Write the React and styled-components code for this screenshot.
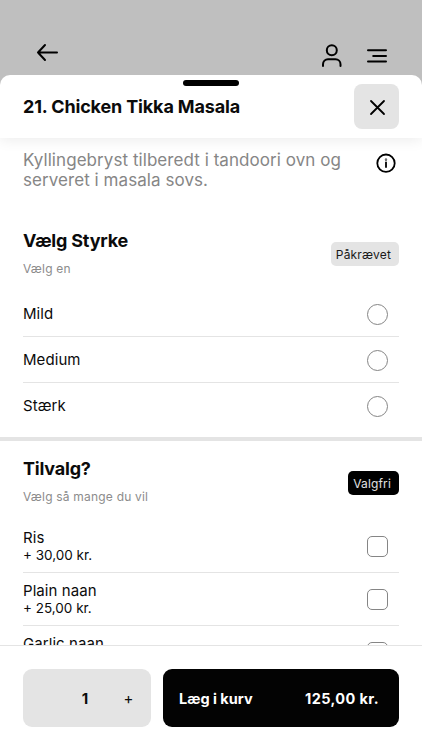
import React from "react";
import styled, { createGlobalStyle } from "styled-components";

// --- Menu Data ---
const strengths = ["Mild", "Medium", "Stærk"];

const extras = [
  { name: "Ris", price: "+ 30,00 kr." },
  { name: "Plain naan", price: "+ 25,00 kr." },
  { name: "Garlic naan", price: "+ 30,00 kr." },
];

// --- Styled Components ---

const GlobalStyle = createGlobalStyle`
  * {
    box-sizing: border-box;
  }

  body {
    margin: 0;
    background: #bfbfbf;
    color: #0b0b0b;
    font-family: Inter, "Liberation Sans", sans-serif;
  }

  button {
    border: none;
    padding: 0;
    font-family: inherit;
    color: inherit;
    cursor: pointer;
  }
`;

const Screen = styled.div`
  display: flex;
  flex-direction: column;
  width: 422px;
  height: 750px;
  overflow: hidden;
  background: #bfbfbf;
`;

const TopBar = styled.header`
  display: flex;
  align-items: flex-start;
  height: 75px;
  padding: 42px 34px 0 36px;

  svg {
    display: block;
  }
`;

const TopActions = styled.div`
  display: flex;
  gap: 23px;
  margin-left: auto;
`;

const Sheet = styled.main`
  display: flex;
  flex-direction: column;
  flex: 1;
  min-height: 0;
  background: #fff;
  border-radius: 10px 10px 0 0;
  overflow: hidden;
`;

const SheetHeader = styled.div`
  position: relative;
  display: flex;
  align-items: center;
  justify-content: space-between;
  height: 63px;
  padding: 0 23px;
  flex-shrink: 0;
  box-shadow: 0 1px 14px rgba(0, 0, 0, 0.09);
`;

const Handle = styled.div`
  position: absolute;
  top: 4.5px;
  left: 183px;
  width: 56px;
  height: 6px;
  border-radius: 3px;
  background: #000;
`;

const Title = styled.h1`
  margin: 0;
  font-size: 18px;
  line-height: 24px;
  font-weight: 700;
  letter-spacing: -0.15px;
`;

const CloseButton = styled.button`
  display: flex;
  align-items: center;
  justify-content: center;
  width: 45px;
  height: 45px;
  padding: 1px 0 0 1px;
  border-radius: 8px;
  background: #e4e4e4;
`;

const Content = styled.div`
  flex: 1;
  min-height: 0;
  overflow: hidden;
`;

const Intro = styled.div`
  display: flex;
  justify-content: space-between;
  height: 91px;
  padding: 12px 26px 0 23px;

  svg {
    margin-top: 3px;
  }
`;

const Description = styled.p`
  margin: 0;
  color: #868686;
  font-size: 17px;
  line-height: 20px;
  letter-spacing: 0.06px;
  white-space: nowrap;
`;

const SectionHeader = styled.div`
  display: flex;
  justify-content: space-between;
  padding: 0 23px;
`;

const SectionTitle = styled.h2`
  margin: 0;
  font-size: 18px;
  line-height: 24px;
  font-weight: 700;
  letter-spacing: -0.2px;
`;

const Hint = styled.p`
  margin: 8px 0 0;
  color: #8c8c8c;
  font-size: 12px;
  line-height: 16px;
  letter-spacing: 0.2px;
`;

const Badge = styled.span`
  display: flex;
  align-items: center;
  height: 24px;
  margin-top: ${(props) => (props.$dark ? 14 : 13)}px;
  padding: 0 8px 0 5px;
  border-radius: 5px;
  font-size: 12px;
  letter-spacing: 0.15px;
  color: ${(props) => (props.$dark ? "#e0e0e0" : "#1a1a1a")};
  background: ${(props) => (props.$dark ? "#000" : "#e4e4e4")};
`;

const Options = styled.ul`
  list-style: none;
  margin: ${(props) => props.$top}px 23px 0;
  padding: 0;
`;

const Option = styled.li`
  display: flex;
  align-items: center;
  justify-content: space-between;
  height: ${(props) => props.$height}px;
  padding: 1px 11px 0 0;
  border-bottom: 1px solid #e4e4e4;

  &:last-child {
    border-bottom-color: transparent;
  }
`;

const OptionName = styled.div`
  font-size: 15px;
  line-height: 18px;
  letter-spacing: 0.07px;
`;

const OptionPrice = styled.div`
  font-size: 13.5px;
  line-height: 17px;
`;

const Control = styled.span`
  width: 21px;
  height: 21px;
  border: 1px solid #858585;
  border-radius: ${(props) => (props.$round ? "50%" : "5px")};
`;

const Divider = styled.div`
  height: 4px;
  margin: 8px 0 16px;
  background: #e4e4e4;
`;

const Footer = styled.footer`
  display: flex;
  gap: 12px;
  height: 105px;
  padding: 23px 23px 0;
  flex-shrink: 0;
  border-top: 1px solid #e4e4e4;
`;

const Stepper = styled.div`
  display: grid;
  grid-template-columns: 50px 24px 1fr;
  align-items: center;
  width: 128px;
  height: 58px;
  border-radius: 9px;
  background: #e4e4e4;
`;

const Quantity = styled.span`
  grid-column: 2;
  text-align: center;
  font-size: 15px;
  font-weight: 700;
`;

const StepButton = styled.button`
  padding-left: 9px;
  padding-top: 1px;
  background: none;
  font-size: 15px;
  line-height: 18px;
`;

const CartButton = styled.button`
  display: flex;
  align-items: center;
  justify-content: space-between;
  width: 236px;
  height: 58px;
  padding: 0 20px 0 16px;
  border-radius: 9px;
  background: #030303;
  color: #fff;
  font-size: 14.5px;
  font-weight: 700;
`;

const Total = styled.span`
  letter-spacing: 0.4px;
`;

const Stroke = styled.svg.attrs({ fill: "none", stroke: "#000" })`
  flex-shrink: 0;
  stroke-linecap: round;
  stroke-linejoin: round;
`;

// --- Component ---
export default function App() {
  return (
    <Screen>
      <GlobalStyle />
      <TopBar>
        <Stroke width="24" height="22" strokeWidth="2">
          <path d="M21 10.5H2M9 3 2 10.500 9 18" />
        </Stroke>
        <TopActions>
          <Stroke width="22" height="28" strokeWidth="2">
            <circle cx="10.8" cy="8.3" r="5" />
            <path d="M2 24v-1.800a5 5 0 0 1 5-5h7.500a5 5 0 0 1 5 5V24" />
          </Stroke>
          <Stroke width="22" height="28" strokeWidth="2">
            <path d="M2 8.300h18M7.200 13.900h12.800M2 19.600h18" />
          </Stroke>
        </TopActions>
      </TopBar>

      <Sheet>
        <SheetHeader>
          <Handle />
          <Title>21. Chicken Tikka Masala</Title>
          <CloseButton aria-label="Luk">
            <Stroke width="17" height="17" strokeWidth="1.8">
              <path d="M2 2l13 13M15 2 2 15" />
            </Stroke>
          </CloseButton>
        </SheetHeader>

        <Content>
          <Intro>
            <Description>
              Kyllingebryst tilberedt i tandoori ovn og
              <br />
              serveret i masala sovs.
            </Description>
            <Stroke width="20" height="20" strokeWidth="1.8">
              <circle cx="10" cy="10.2" r="8.7" />
              <path d="M10 9.500v4.500" />
              <circle cx="10" cy="6.600" r="0.3" />
            </Stroke>
          </Intro>

          <SectionHeader>
            <div>
              <SectionTitle>Vælg Styrke</SectionTitle>
              <Hint>Vælg en</Hint>
            </div>
            <Badge>Påkrævet</Badge>
          </SectionHeader>
          <Options $top={14}>
            {strengths.map((name) => (
              <Option key={name} $height={46}>
                <OptionName>{name}</OptionName>
                <Control $round />
              </Option>
            ))}
          </Options>

          <Divider />

          <SectionHeader>
            <div>
              <SectionTitle>Tilvalg?</SectionTitle>
              <Hint>Vælg så mange du vil</Hint>
            </div>
            <Badge $dark>Valgfri</Badge>
          </SectionHeader>
          <Options $top={14.5}>
            {extras.map((extra) => (
              <Option key={extra.name} $height={53.4}>
                <div>
                  <OptionName>{extra.name}</OptionName>
                  <OptionPrice>{extra.price}</OptionPrice>
                </div>
                <Control />
              </Option>
            ))}
          </Options>
        </Content>

        <Footer>
          <Stepper>
            <Quantity>1</Quantity>
            <StepButton aria-label="Tilføj en">+</StepButton>
          </Stepper>
          <CartButton>
            <span>Læg i kurv</span>
            <Total>125,00 kr.</Total>
          </CartButton>
        </Footer>
      </Sheet>
    </Screen>
  );
}
